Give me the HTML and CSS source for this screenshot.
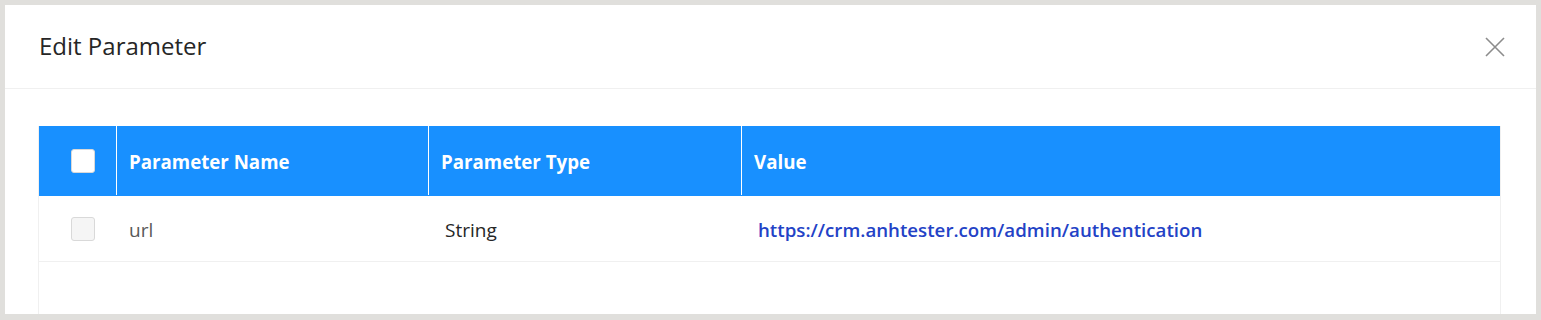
FILE: index.html
```html
<!DOCTYPE html>
<html lang="en">
<head>
<meta charset="utf-8">
<title>Edit Parameter</title>
<link rel="stylesheet" href="styles.css">
</head>
<body>
<div class="modal">
  <div class="modal-header">
    <h1 class="modal-title">Edit Parameter</h1>
    <button class="close" aria-label="Close">
      <svg width="20" height="20" viewBox="0 0 20 20"><path d="M1 1L19 19M19 1L1 19" stroke="#8c8c8c" stroke-width="1.6" fill="none"/></svg>
    </button>
  </div>
  <div class="modal-body">
    <div class="table">
      <div class="thead">
        <div class="cell c-check"><span class="checkbox head-box"></span></div>
        <div class="cell c-name th">Parameter Name</div>
        <div class="cell c-type th">Parameter Type</div>
        <div class="cell c-value th">Value</div>
      </div>
      <div class="row">
        <div class="cell c-check"><span class="checkbox disabled-box"></span></div>
        <div class="cell c-name td muted">url</div>
        <div class="cell c-type td inset">String</div>
        <div class="cell c-value td inset"><a class="link" href="#">https://crm.anhtester.com/admin/authentication</a></div>
      </div>
    </div>
  </div>
</div>
</body>
</html>
```

FILE: styles.css
```css
* { box-sizing: border-box; }
html, body { margin: 0; }
body {
  background: #e0dfdc;
  padding: 5px 5px 6px 5px;
  font-family: "Open Sans", "Noto Sans", sans-serif;
  height: 320px;
}
.modal {
  background: #fff;
  height: 309px;
  overflow: hidden;
  display: flex;
  flex-direction: column;
}
.modal-header {
  height: 84px;
  flex: none;
  border-bottom: 1px solid #f0f0f0;
  display: flex;
  align-items: center;
  justify-content: space-between;
  padding: 0 31px 0 34px;
}
.modal-title {
  margin: 0;
  font-size: 24px;
  font-weight: 400;
  color: #262626;
  line-height: 1;
  padding-bottom: 2px;
}
.close {
  border: 0;
  background: none;
  padding: 0;
  width: 20px;
  height: 20px;
  display: flex;
  cursor: pointer;
}
.modal-body {
  flex: 1;
  padding: 37px 35px 0 33px;
  display: flex;
}
.table {
  flex: 1;
  border: 1px solid #f0f0f0;
  border-bottom: 0;
  display: flex;
  flex-direction: column;
}
.thead, .row {
  display: grid;
  grid-template-columns: 77px 312px 313px 1fr;
}
.thead {
  background: #1890ff;
  height: 70px;
  margin-top: -1px;
}
.row {
  height: 66px;
  border-bottom: 1px solid #f0f0f0;
}
.cell {
  display: flex;
  align-items: center;
}
.thead .cell + .cell {
  border-left: 1px solid #fff;
  margin: 0 0 1px 0;
}
.c-check { padding-left: 32px; }
.th {
  color: #fff;
  font-weight: 700;
  font-size: 18.7px;
  padding-left: 12px;
  padding-top: 2px;
}
.td {
  font-size: 19px;
  color: #262626;
  padding-left: 13px;
  padding-top: 2px;
}
.td.inset { padding-left: 17px; }
.muted { color: #595959; }
.checkbox {
  width: 24px;
  height: 24px;
  border-radius: 3px;
  display: block;
}
.head-box {
  background: #fff;
  border: 1px solid #d9d9d9;
}
.disabled-box {
  background: #f5f5f5;
  border: 1px solid #d9d9d9;
}
.link {
  color: #2342c6;
  font-weight: 600;
  font-size: 18.7px;
  text-decoration: none;
}
```
